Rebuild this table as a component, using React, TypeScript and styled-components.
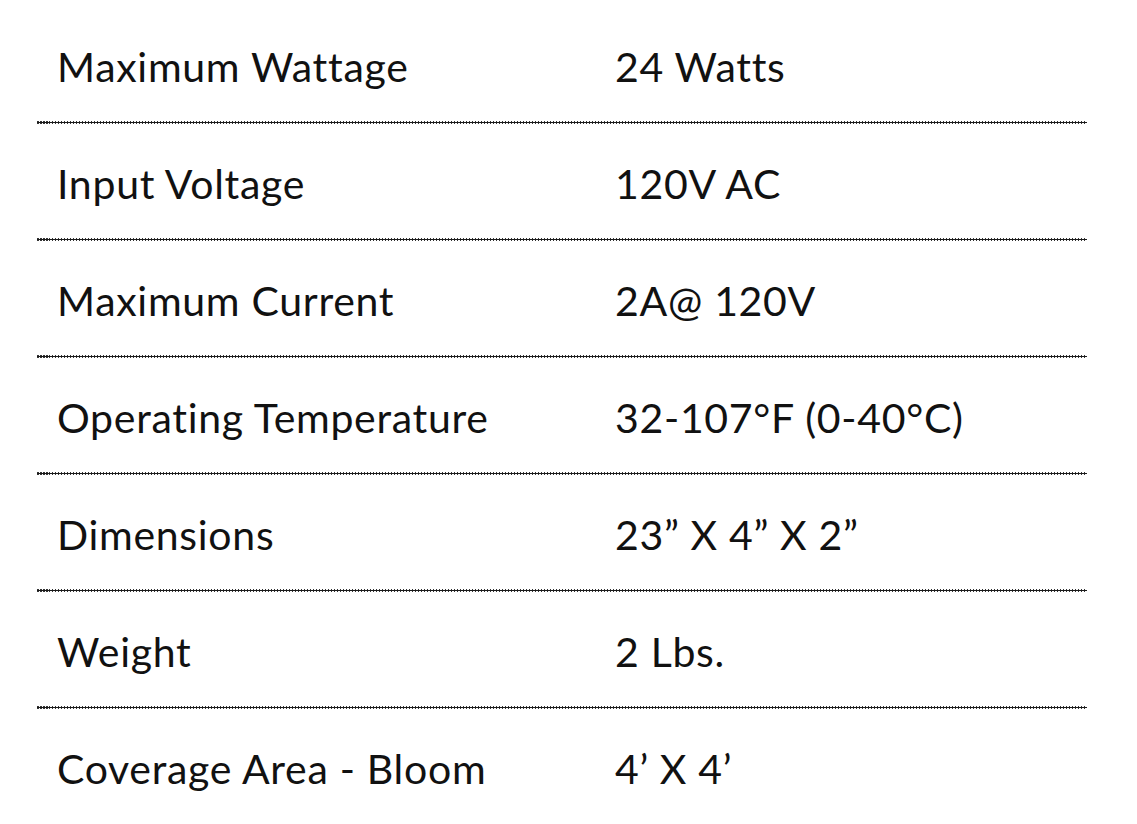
import React from "react";
import styled, { createGlobalStyle } from "styled-components";

type Spec = {
  label: string;
  value: string;
};

const specs: Spec[] = [
  { label: "Maximum Wattage", value: "24 Watts" },
  { label: "Input Voltage", value: "120V AC" },
  { label: "Maximum Current", value: "2A@ 120V" },
  { label: "Operating Temperature", value: "32-107°F (0-40°C)" },
  { label: "Dimensions", value: "23” X 4” X 2”" },
  { label: "Weight", value: "2 Lbs." },
  { label: "Coverage Area - Bloom", value: "4’ X 4’" }
];

const App: React.FC = () => {
  return (
    <>
      <GlobalStyle />
      <SpecTable>
        {specs.map((spec, i) => (
          <SpecRow key={spec.label} last={i === specs.length - 1}>
            <SpecText>{spec.label}</SpecText>
            <SpecText>{spec.value}</SpecText>
          </SpecRow>
        ))}
      </SpecTable>
    </>
  );
};

const GlobalStyle = createGlobalStyle`
  html, body {
    margin: 0;
    padding: 0;
    background: #ffffff;
  }
  body {
    font-family: Lato, "Open Sans", sans-serif;
    color: #111111;
  }
`;

const SpecTable = styled.div`
  width: 1050px;
  margin-left: 37px;
  padding-top: 7px;
  display: flex;
  flex-direction: column;
`;

const SpecRow = styled.div<{ last: boolean }>`
  display: grid;
  grid-template-columns: 558px 1fr;
  align-items: center;
  height: 114px;
  padding-left: 20px;
  box-sizing: border-box;
  position: relative;
  margin-bottom: 3px;
  ${({ last }) =>
    last
      ? ""
      : `
  &::after {
    content: "";
    position: absolute;
    left: 0;
    right: 0;
    bottom: -3px;
    height: 3px;
    background:
      linear-gradient(#1a1a1a, #1a1a1a) center / 100% 1px no-repeat,
      repeating-linear-gradient(90deg, #333 0 1.5px, transparent 1.5px 3px);
  }`}
`;

const SpecText = styled.span`
  font-size: 41px;
  letter-spacing: 0.7px;
  line-height: 1;
  padding-top: 4px;
  white-space: nowrap;
`;

export default App;
